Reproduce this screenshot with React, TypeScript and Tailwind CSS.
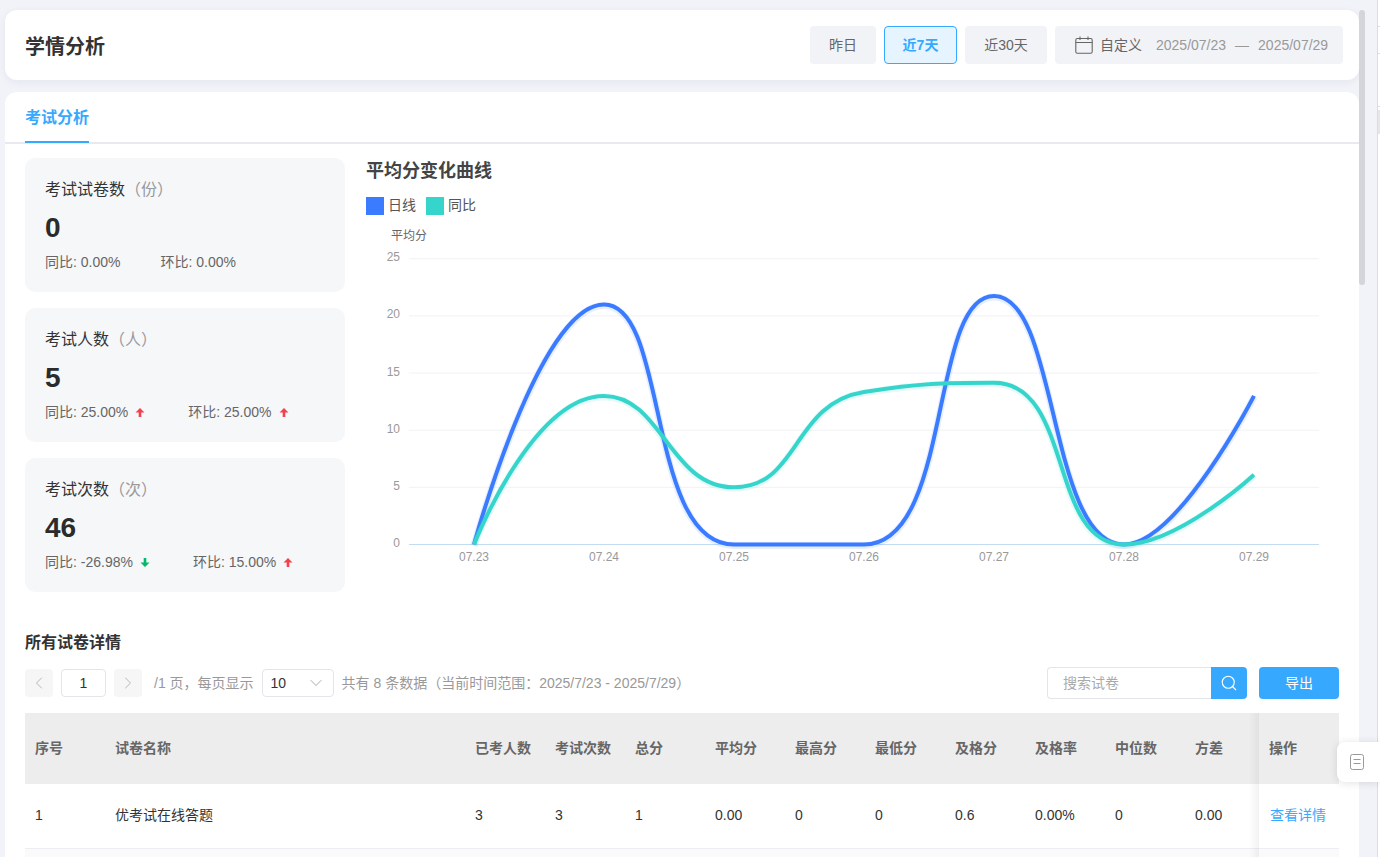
import React from "react";
import { ChevronDown, ChevronLeft, ChevronRight, Search } from "lucide-react";

const FONT = "font-['Liberation_Sans','Noto_Sans_CJK_SC',sans-serif]";

const XS = [474, 604, 734, 864, 994, 1124, 1254];
const Y0 = 544.5;
const UNIT = 11.43;

function curve(vals: number[]): string {
  const pts = vals.map((v, i) => [XS[i], Y0 - v * UNIT] as [number, number]);
  const s = 0.5;
  let d = `M${pts[0][0]} ${pts[0][1]}`;
  let cp0x = pts[0][0];
  let cp0y = pts[0][1];
  const clamp = (v: number, a: number, b: number) => Math.max(Math.min(v, Math.max(a, b)), Math.min(a, b));
  for (let i = 1; i < pts.length; i++) {
    const [x, y] = pts[i];
    const [px, py] = pts[i - 1];
    if (i === pts.length - 1) {
      d += ` C${cp0x} ${cp0y} ${x} ${y} ${x} ${y}`;
      break;
    }
    const [nx, ny] = pts[i + 1];
    let dx = nx - px;
    let dy = ny - py;
    const lp = Math.hypot(x - px, y - py);
    const ln = Math.hypot(x - nx, y - ny);
    const r = ln / (ln + lp);
    let ncx = clamp(x + dx * s * r, nx, x);
    let ncy = clamp(y + dy * s * r, ny, y);
    dx = ncx - x;
    dy = ncy - y;
    const cx = clamp(x - (dx * lp) / ln, px, x);
    const cy = clamp(y - (dy * lp) / ln, py, y);
    dx = x - cx;
    dy = y - cy;
    ncx = x + (dx * ln) / lp;
    ncy = y + (dy * ln) / lp;
    d += ` C${cp0x} ${cp0y} ${cx} ${cy} ${x} ${y}`;
    cp0x = ncx;
    cp0y = ncy;
  }
  return d;
}

function Arrow({ up }: { up: boolean }) {
  return (
    <svg width="10" height="10" viewBox="0 0 10 10" className="ml-[7px] shrink-0">
      <path
        d={up ? "M5 1 L9.5 5.5 H6.3 V10 H3.7 V5.5 H0.5 Z" : "M5 10 L9.5 5.5 H6.3 V1 H3.7 V5.5 H0.5 Z"}
        fill={up ? "#f4404c" : "#00b96b"}
      />
    </svg>
  );
}

function StatCard({
  title,
  unit,
  value,
  a,
  b,
  aDir,
  bDir,
  gap,
}: {
  title: string;
  unit: string;
  value: string;
  a: string;
  b: string;
  aDir?: boolean;
  bDir?: boolean;
  gap: string;
}) {
  return (
    <div className="h-[134px] rounded-[10px] bg-[#f6f7f9] px-5 pt-[21px]">
      <div className="h-[22px] text-[16px] leading-[22px] text-[#333]">
        {title}
        <span className="text-[#999]">（{unit}）</span>
      </div>
      <div className="mt-[7px] h-[40px] text-[28px] font-bold leading-[40px] text-[#2b2b2b]">{value}</div>
      <div className={`mt-[4px] flex h-[20px] items-center text-[14px] leading-[20px] text-[#666] ${gap}`}>
        <span className="flex items-center">
          同比: {a}
          {aDir !== undefined && <Arrow up={aDir} />}
        </span>
        <span className="flex items-center">
          环比: {b}
          {bDir !== undefined && <Arrow up={bDir} />}
        </span>
      </div>
    </div>
  );
}

function Chart() {
  const blue = curve([0, 21, 0, 0, 21.75, 0, 13]);
  const teal = curve([0, 13, 5, 13.35, 14.15, 0, 6.1]);
  return (
    <svg width="973" height="350" viewBox="366 225 973 350" className="block">
      <text x="391" y="240" fontSize="12" fill="#666">平均分</text>
      {[25, 20, 15, 10, 5].map((v) => (
        <line key={v} x1="409" x2="1319" y1={Y0 - v * UNIT} y2={Y0 - v * UNIT} stroke="#f1f2f5" strokeWidth="1" />
      ))}
      <line x1="409" x2="1319" y1="544.5" y2="544.5" stroke="#c4dcf0" strokeWidth="1" />
      {[25, 20, 15, 10, 5, 0].map((v) => (
        <text key={v} x="400" y={Y0 - v * UNIT + 2.5} fontSize="12" fill="#999" textAnchor="end">
          {v}
        </text>
      ))}
      {["07.23", "07.24", "07.25", "07.26", "07.27", "07.28", "07.29"].map((t, i) => (
        <text key={t} x={XS[i]} y="561" fontSize="12" fill="#999" textAnchor="middle">
          {t}
        </text>
      ))}
      <path d={blue} fill="none" stroke="#3a7bff" strokeOpacity="0.12" strokeWidth="7" transform="translate(0 1)" />
      <path d={blue} fill="none" stroke="#3a7bff" strokeWidth="4" />
      <path d={teal} fill="none" stroke="#36d5cc" strokeOpacity="0.12" strokeWidth="7" transform="translate(0 1)" />
      <path d={teal} fill="none" stroke="#36d5cc" strokeWidth="4" />
    </svg>
  );
}

const HEADERS = ["已考人数", "考试次数", "总分", "平均分", "最高分", "最低分", "及格分", "及格率", "中位数", "方差"];
const ROW = ["3", "3", "1", "0.00", "0", "0", "0.6", "0.00%", "0", "0.00"];

function Table() {
  return (
    <table className="w-[1314px] table-fixed border-collapse text-left text-[14px]">
      <colgroup>
        <col className="w-[80px]" />
        <col className="w-[360px]" />
        {HEADERS.map((h, i) => (
          <col key={h} className={i === HEADERS.length - 1 ? "w-[74px]" : "w-[80px]"} />
        ))}
        <col className="w-[80px]" />
      </colgroup>
      <thead>
        <tr className="h-[71px] bg-[#ededed] font-bold text-[#666]">
          <th className="pl-[10px] font-bold">序号</th>
          <th className="pl-[10px] font-bold">试卷名称</th>
          {HEADERS.map((h) => (
            <th key={h} className="pl-[10px] font-bold">
              {h}
            </th>
          ))}
          <th className="bg-[#ededed] pl-[10px] font-bold">操作</th>
        </tr>
      </thead>
      <tbody>
        <tr className="h-[64px] border-b border-[#eceef4] text-[#333]">
          <td className="pl-[10px]">1</td>
          <td className="pl-[10px]">优考试在线答题</td>
          {ROW.map((c, i) => (
            <td key={i} className="pl-[10px]">
              {c}
            </td>
          ))}
          <td className="pl-[11px] text-[#36a9ff]">查看详情</td>
        </tr>
        <tr className="h-[40px] bg-[#fafafa]">
          <td colSpan={13} />
        </tr>
      </tbody>
    </table>
  );
}

export default function App() {
  return (
    <div className={`relative flex h-[857px] w-full overflow-hidden bg-[#f2f3f8] ${FONT}`}>
      <div className="w-[1359px] shrink-0 pl-[5px] pt-[10px]">
        <header className="flex h-[70px] items-center justify-between rounded-xl bg-white pl-5 pr-4 shadow-[0_2px_8px_rgba(30,40,80,0.06)]">
          <h1 className="pt-[3px] text-[20px] font-bold text-[#333]">学情分析</h1>
          <div className="flex h-[38px] items-stretch gap-2 text-[14px] text-[#666]">
            <button className="w-[66px] rounded bg-[#f2f3f7]">昨日</button>
            <button className="w-[73px] rounded border border-[#36a9ff] bg-[#e6f4ff] font-bold text-[#36a9ff]">近7天</button>
            <button className="w-[82px] rounded bg-[#f2f3f7]">近30天</button>
            <div className="flex w-[288px] items-center rounded bg-[#f2f3f7] pl-[20px]">
              <svg width="18" height="18" viewBox="0 0 18 18" fill="none" stroke="#666" strokeWidth="1.1">
                <rect x="0.8" y="2.5" width="16.4" height="14.7" rx="1.5" />
                <path d="M0.8 6.5H17.2M5 0.5V4M13 0.5V4" />
              </svg>
              <span className="ml-[7px]">自定义</span>
              <span className="ml-[14px] text-[#999]">2025/07/23</span>
              <span className="ml-[9px] text-[#999]">—</span>
              <span className="ml-[9px] text-[#999]">2025/07/29</span>
            </div>
          </div>
        </header>

        <main className="mt-3 h-[800px] rounded-t-xl bg-white">
          <div className="h-[52px] border-b-2 border-[#e8eaf0] px-5">
            <div className="h-[51px] w-16 border-b-2 border-[#36a9ff] pt-[15px] text-[16px] font-bold leading-[22px] text-[#36a9ff]">
              考试分析
            </div>
          </div>

          <div className="flex px-5 pt-[14px]">
            <div className="flex w-[320px] flex-col gap-4">
              <StatCard title="考试试卷数" unit="份" value="0" a="0.00%" b="0.00%" gap="gap-[40px]" />
              <StatCard title="考试人数" unit="人" value="5" a="25.00%" aDir={true} b="25.00%" bDir={true} gap="gap-[43px]" />
              <StatCard title="考试次数" unit="次" value="46" a="-26.98%" aDir={false} b="15.00%" bDir={true} gap="gap-[43px]" />
            </div>
            <div className="ml-[21px] flex-1">
              <h2 className="h-[26px] text-[18px] font-bold leading-[26px] text-[#444]">平均分变化曲线</h2>
              <div className="mt-[12px] flex h-[19px] items-center text-[14px] text-[#555]">
                <span className="h-[18px] w-[18px] bg-[#3a7bff]" />
                <span className="ml-1">日线</span>
                <span className="ml-[10px] h-[18px] w-[18px] bg-[#36d5cc]" />
                <span className="ml-1">同比</span>
              </div>
              <div className="mt-[10px]">
                <Chart />
              </div>
            </div>
          </div>

          <div className="px-5 pt-[38px]">
            <h3 className="h-6 text-[16px] font-bold leading-[26px] text-[#333]">所有试卷详情</h3>
            <div className="mt-[13px] flex h-8 items-center text-[14px] text-[#999]">
              <button className="flex h-7 w-7 items-center justify-center rounded bg-[#f6f6f7] text-[#aaa]">
                <ChevronLeft size={20} strokeWidth={1} />
              </button>
              <div className="ml-2 flex h-7 w-[45px] items-center justify-center rounded border border-[#e4e5ea] text-[#333]">1</div>
              <button className="ml-2 flex h-7 w-7 items-center justify-center rounded bg-[#f6f6f7] text-[#aaa]">
                <ChevronRight size={20} strokeWidth={1} />
              </button>
              <span className="ml-3">/1 页，每页显示</span>
              <div className="ml-2 flex h-7 w-[72px] items-center justify-between rounded border border-[#e4e5ea] pl-2 pr-[7px] text-[#333]">
                10
                <ChevronDown size={20} strokeWidth={1} className="text-[#999]" />
              </div>
              <span className="ml-2">共有 8 条数据（当前时间范围：2025/7/23 - 2025/7/29）</span>
              <div className="ml-auto flex h-8 w-[200px] rounded">
                <div className="flex flex-1 items-center rounded-l border border-r-0 border-[#e4e5ea] pl-[15px] text-[#aaa]">搜索试卷</div>
                <div className="flex w-9 items-center justify-center rounded-r bg-[#36a9ff] text-white">
                  <Search size={18} strokeWidth={1.5} />
                </div>
              </div>
              <button className="ml-3 h-8 w-20 rounded bg-[#36a9ff] text-white">导出</button>
            </div>
            <div className="relative mt-[14px] h-[200px] w-[1314px] overflow-hidden">
              <Table />
              <div className="pointer-events-none absolute bottom-0 right-[80px] top-0 w-[10px] bg-gradient-to-l from-[rgba(0,0,0,0.05)] to-transparent" />
            </div>
          </div>
        </main>
      </div>

      {/* scrollbar thumb */}
      <div className="absolute left-[1359px] top-[10px] h-[275px] w-[6px] rounded-[3px] bg-[#d4d5da]" />

      {/* right page edge */}
      <div className="absolute bottom-0 left-[1377px] right-0 top-0 border-l border-[#dcdde1] bg-white">
        <div className="mt-[26px] h-px bg-[#dcdde1]" />
        <div className="mt-[26px] h-px bg-[#dcdde1]" />
        <div className="mt-[52px] h-px bg-[#dcdde1]" />
        <div className="mt-[3px] h-[24px] bg-[#e6e6e8]" />
      </div>

      {/* floating notes button */}
      <div className="absolute left-[1337px] right-0 top-[742px] flex h-10 items-center rounded-l-lg bg-white pl-[13px] shadow-[0_1px_8px_rgba(0,0,0,0.12)]">
        <svg width="14" height="16" viewBox="0 0 14 16" fill="none" stroke="#999" strokeWidth="1">
          <rect x="0.5" y="0.5" width="13" height="15" rx="2" />
          <path d="M3.5 5.5H10.5M3.5 9.5H10.5" />
        </svg>
      </div>
    </div>
  );
}
